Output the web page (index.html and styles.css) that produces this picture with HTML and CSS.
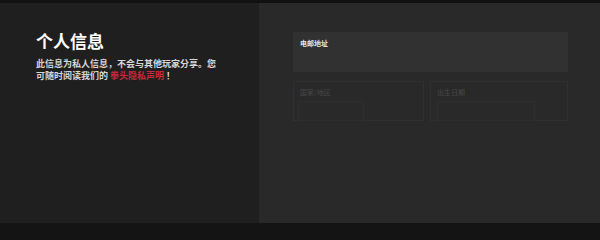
FILE: index.html
```html
<!DOCTYPE html>
<html lang="zh-CN">
<head>
<meta charset="utf-8">
<link rel="stylesheet" href="styles.css">
</head>
<body>
<div class="topbar"></div>
<main class="main">
  <section class="intro">
    <h1 class="title">个人信息</h1>
    <p class="desc">
      <span class="line">此信息为私人信息，不会与其他玩家分享。您</span>
      <span class="line">可随时阅读我们的 <span class="link">拳头隐私声明</span> ！</span>
    </p>
  </section>
  <section class="form">
    <div class="field email">
      <span class="label">电邮地址</span>
    </div>
    <div class="row">
      <div class="field dim">
        <span class="label muted">国家/地区</span>
        <div class="inner small"></div>
      </div>
      <div class="field dim">
        <span class="label muted">出生日期</span>
        <div class="inner wide"></div>
      </div>
    </div>
  </section>
</main>
<div class="bottombar"></div>
</body>
</html>
```
FILE: styles.css
```css
* { box-sizing: border-box; }
html, body { margin: 0; padding: 0; }
html { background: #141414; }
body {
  width: 600px;
  height: 228px;
  background: #141414;
  font-family: "Noto Sans CJK SC", "Noto Sans", sans-serif;
  display: flex;
  flex-direction: column;
  overflow: hidden;
}
.topbar { height: 3px; flex: none; background: #111111; }
.bottombar { height: 5px; flex: none; background: #141414; }
.main {
  height: 220px;
  flex: none;
  display: flex;
}
.intro {
  width: 259px;
  background: #201f20;
  padding: 26px 30px 0 36px;
}
.title {
  margin: 0;
  font-size: 17px;
  line-height: 24px;
  font-weight: 700;
  color: #ffffff;
}
.desc {
  margin: 5px 0 0;
  font-size: 9px;
  line-height: 12px;
  font-weight: 700;
  color: #d6d6d6;
}
.line { display: block; white-space: nowrap; }
.link { color: #c8283a; }
.form {
  flex: 1;
  background: #2a292a;
  padding: 29px 32px 0 34px;
}
.field {
  position: relative;
}
.email {
  height: 40px;
  background: #323132;
  padding: 6px 7px;
}
.label {
  display: block;
  font-size: 7px;
  line-height: 10px;
  font-weight: 700;
  color: #e2e2e2;
}
.row {
  display: grid;
  grid-template-columns: 131px 138px;
  gap: 6px;
  margin-top: 9px;
}
.dim {
  height: 40px;
  border: 1px solid #313031;
  padding: 5px 5px 0 6px;
}
.muted { color: #484748; font-weight: 400; }
.inner {
  margin-top: 4px;
  height: 20px;
  border: 1px solid #2f2e2f;
}
.inner.small { width: 66px; margin-left: -2px; }
.inner.wide { width: 98px; }
```
